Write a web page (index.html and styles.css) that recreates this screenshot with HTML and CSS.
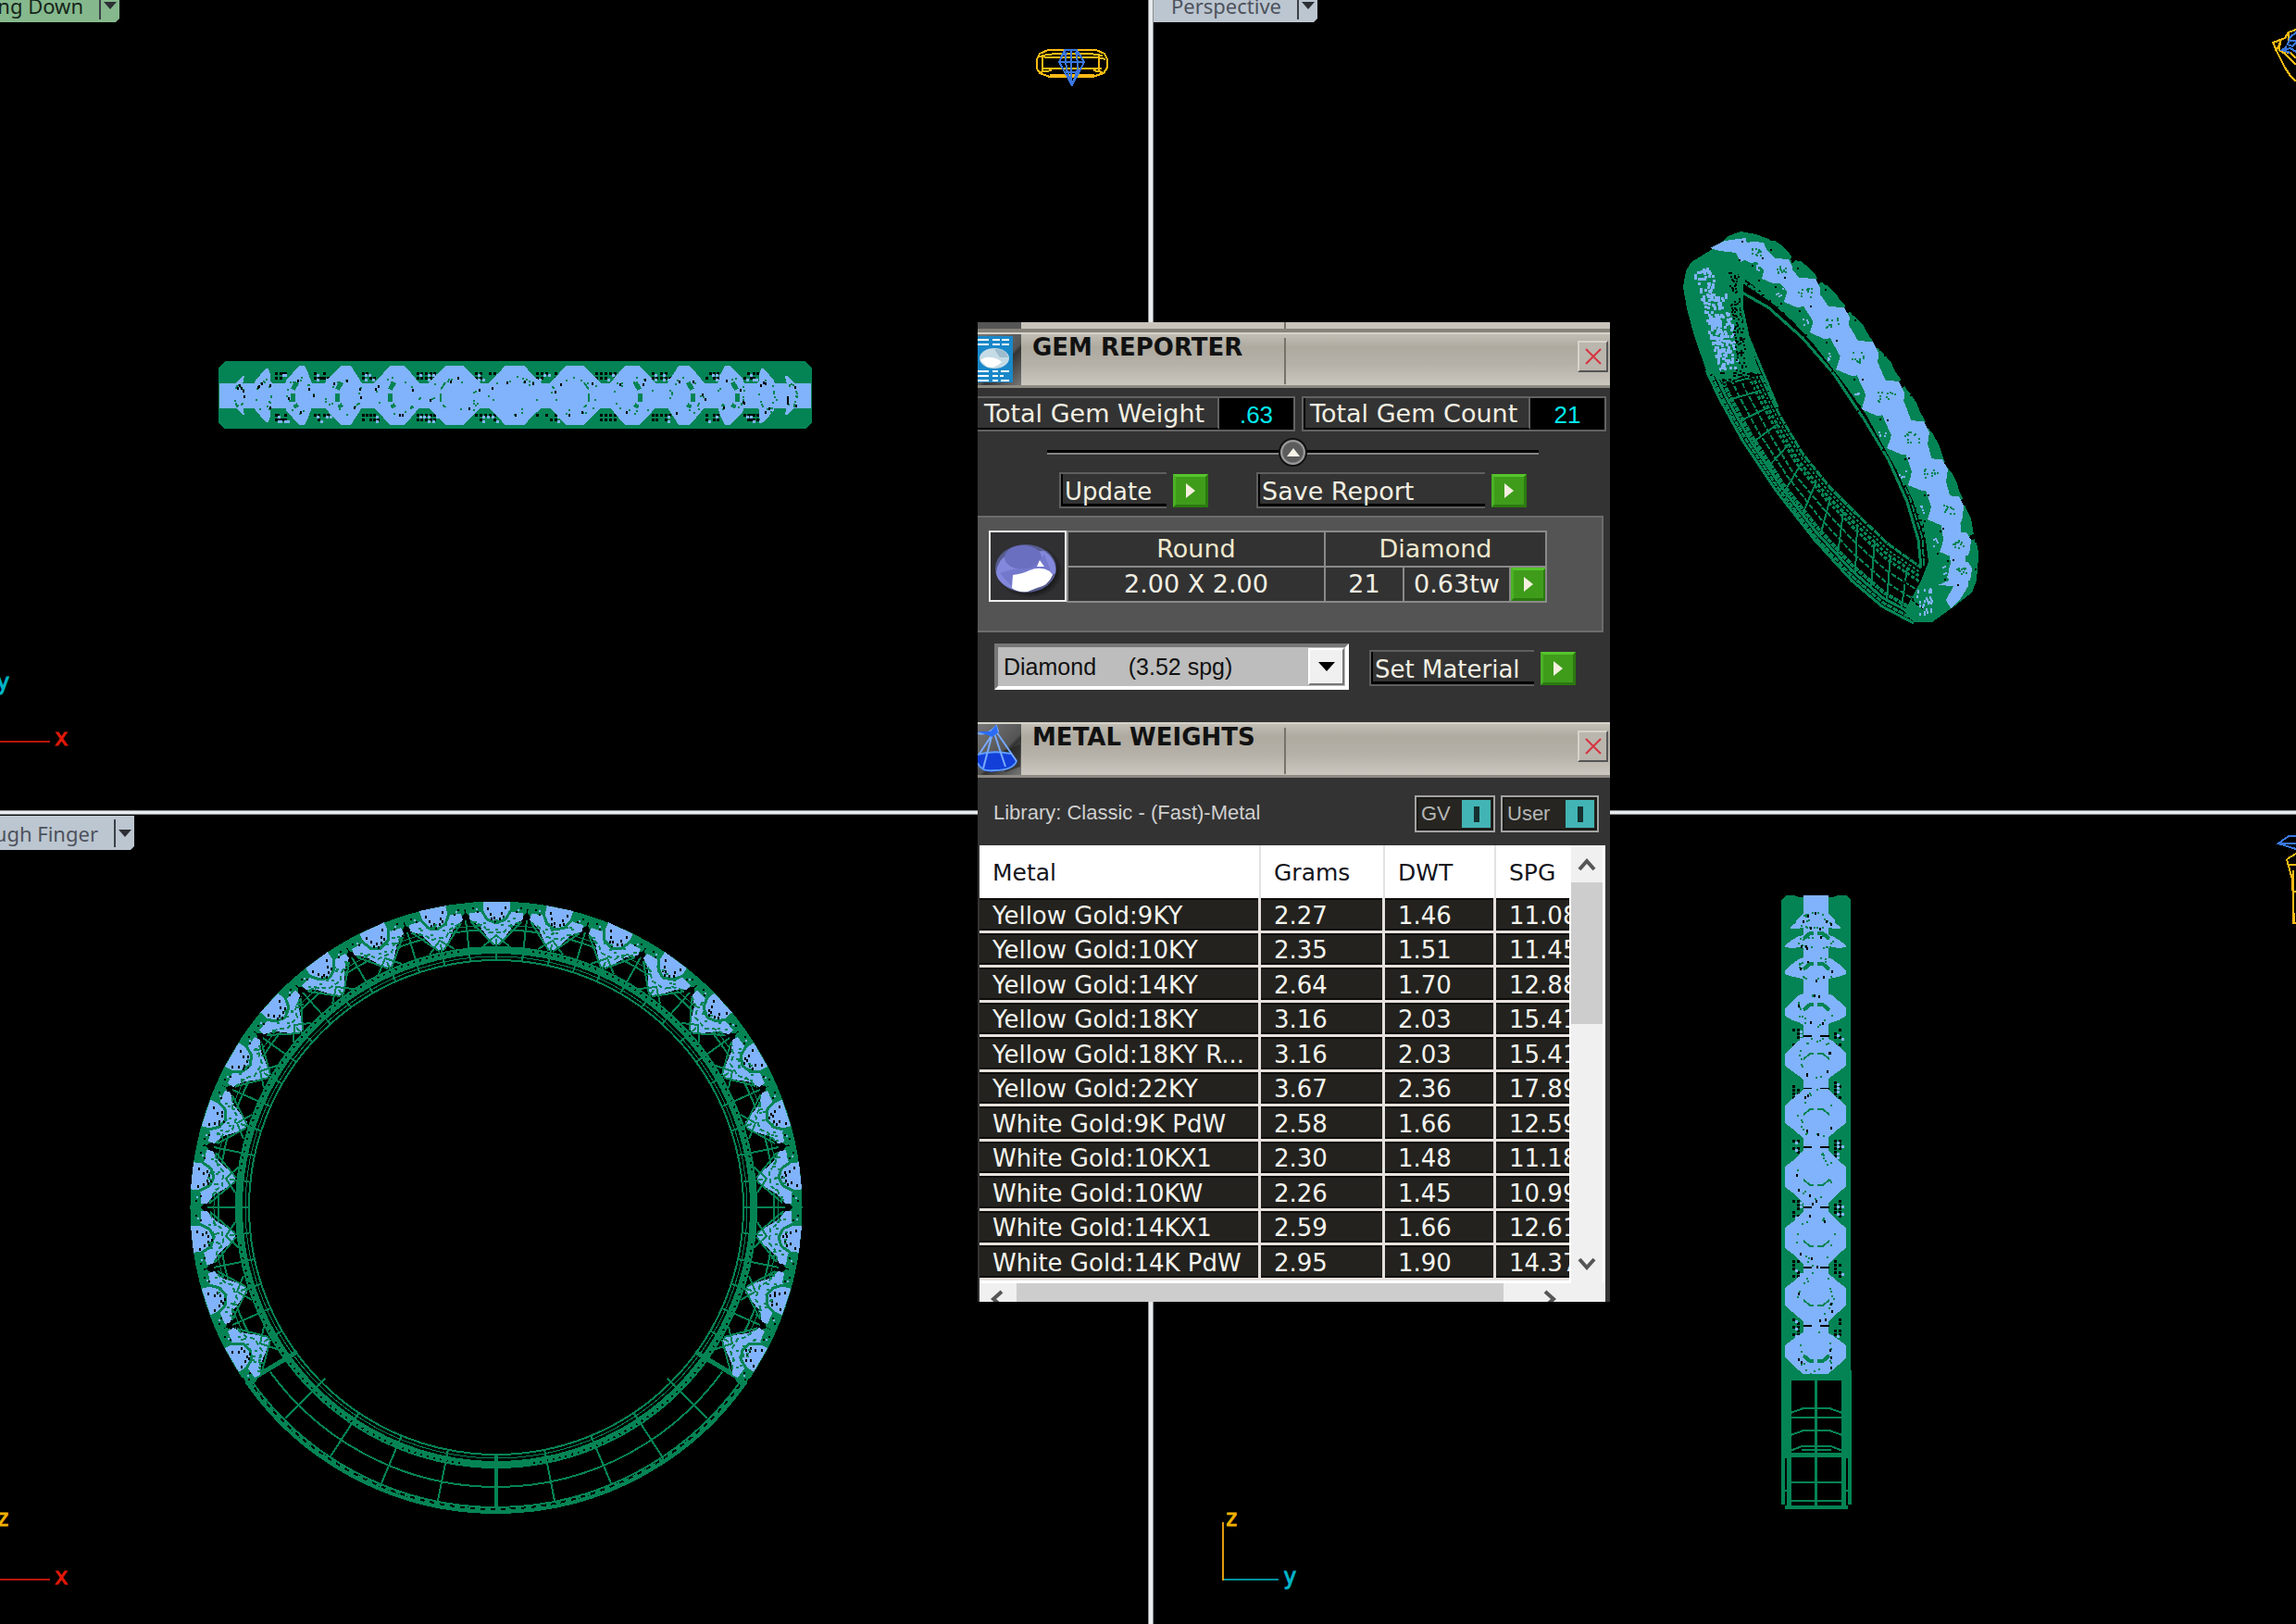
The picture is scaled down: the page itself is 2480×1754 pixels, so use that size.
FILE: index.html
```html
<!DOCTYPE html>
<html lang="en">
<head>
<meta charset="utf-8">
<title>Ring model - Gem Reporter</title>
<link rel="stylesheet" href="styles.css">
</head>
<body>
<main class="workspace">
  <section class="viewport">
    <svg class="scene" id="view-top" viewBox="0 0 1240 875" preserveAspectRatio="xMinYMin meet" aria-label="Looking down view">
      <g class="model"></g>
      <g class="gizmo-ring"><path d="M1132 54H1184L1193 58L1196 64V73L1192 79L1180 83H1134L1123 79L1120 74V64L1123 58Z"/><path d="M1125 60L1140 58H1178L1191 60M1125 74H1190M1134 81H1182M1126 60V77M1187 60V77M1122 61L1133 62H1186L1194 64M1123 78L1136 76M1191 78L1181 76"/></g>
      <g class="gizmo-gem"><path d="M1150 54H1163L1171 67L1158 92L1144 67ZM1144 67H1171M1157 54V92M1150 54L1152 75L1158 92M1163 54L1164 75L1158 92M1147 60L1153 57M1167 60L1161 57M1150 78H1165"/></g>
      <text class="axis axis-y" x="-4" y="745">y</text>
      <path class="axis-line-x" d="M0 801H54"/><text class="axis axis-x" x="59" y="805">x</text>
    </svg>
    <button class="view-label view-label-active">Looking Down<span class="view-menu"></span></button>
  </section>
  <section class="viewport">
    <svg class="scene" id="view-persp" viewBox="1246 0 1234 875" preserveAspectRatio="xMinYMin meet" aria-label="Perspective view">
      <g class="model"></g>
      <g class="gizmo-ring"><path d="M2480 32L2472 35L2468 41L2455 46L2461 59L2468 73L2474 82L2480 88M2455 46L2464 43L2461 50L2458 55M2463 44L2462 54L2468 58L2480 70M2472 35V46M2466 56L2474 57L2480 63"/></g>
      <g class="gizmo-gem"><path d="M2480 35L2474 40L2471 48L2476 50L2480 46M2466 54L2474 52L2480 56M2470 50L2465 54L2474 57M2473 44H2480"/></g>
    </svg>
    <button class="view-label">Perspective<span class="view-menu"></span></button>
  </section>
  <section class="viewport">
    <svg class="scene" id="view-front" viewBox="0 880 1240 874" preserveAspectRatio="xMinYMin meet" aria-label="Through finger view">
      <g class="model"></g>
      <text class="axis axis-z" x="-4" y="1648">z</text>
      <path class="axis-line-x" d="M0 1706H54"/><text class="axis axis-x" x="59" y="1711">x</text>
    </svg>
    <button class="view-label view-label-full">Through Finger<span class="view-menu"></span></button>
  </section>
  <section class="viewport">
    <svg class="scene" id="view-side" viewBox="1246 880 1234 874" preserveAspectRatio="xMinYMin meet" aria-label="Side view">
      <g class="model"></g>
      <g class="gizmo-gem"><path d="M2480 903H2472L2461 911L2480 917M2461 911H2480"/></g>
      <g class="gizmo-ring"><path d="M2470 928L2480 922M2470 928L2476 950L2478 997M2473 934H2480M2477 940V997H2480M2478 963H2480"/></g>
      <text class="axis axis-z" x="1323" y="1648">z</text>
      <path class="axis-line-z" d="M1321 1644V1707"/><path class="axis-line-y" d="M1322 1706H1381"/><text class="axis axis-y" x="1386" y="1711">y</text>
    </svg>
  </section>
</main>

<aside class="panel">
  <div class="panel-strip"></div>
  <header class="panel-header">
    <span class="panel-icon">
      <svg width="47" height="58" viewBox="0 0 47 58" aria-hidden="true">
        <rect x="0" y="2" width="38" height="50" fill="#1988c9"/>
        <path d="M0 6H12M16 6H24M26 6H34M0 11H12M16 11H24M26 11H34M0 40H12M16 40H22M25 40H34M0 45H12M16 45H22M24 45H28M0 50H12M16 50H22M25 50H34" stroke="#fff" stroke-width="2"/>
        <ellipse cx="18" cy="26" rx="16" ry="11" fill="#c5dbe6"/>
        <path d="M3 28Q10 22 22 27L26 30Q18 38 10 35Z" fill="#fff"/>
        <path d="M18 16Q30 15 33 25L24 25Z" fill="#9dbccd"/>
      </svg>
    </span>
    <h2 class="panel-title">GEM REPORTER</h2>
    <span class="panel-grip"></span>
    <button class="close" aria-label="Close gem reporter"><svg width="18" height="18" viewBox="0 0 18 18"><path d="M1 1L17 17M17 1L1 17"/></svg></button>
  </header>

  <div class="totals">
    <div class="total total-weight"><span class="total-name">Total Gem Weight</span><output class="total-value">.63</output></div>
    <div class="total total-count"><span class="total-name">Total Gem Count</span><output class="total-value">21</output></div>
  </div>

  <div class="fold">
    <button class="fold-button" aria-label="Collapse"><span class="fold-arrow"></span></button>
  </div>

  <div class="actions">
    <span class="caption caption-update" id="cap-update">Update</span>
    <button class="go" aria-labelledby="cap-update"><span class="go-arrow"></span></button>
    <span class="caption caption-save" id="cap-save">Save Report</span>
    <button class="go" aria-labelledby="cap-save"><span class="go-arrow"></span></button>
  </div>

  <div class="gems">
    <div class="gem-picture">
      <svg width="80" height="72" viewBox="0 0 80 72" aria-hidden="true">
        <defs><radialGradient id="shade"><stop offset="70%" stop-color="#111"/><stop offset="100%" stop-color="#111" stop-opacity="0"/></radialGradient></defs>
        <ellipse cx="42" cy="42" rx="36" ry="29" fill="url(#shade)"/>
        <ellipse cx="38" cy="39" rx="33" ry="26" fill="#555b8c"/>
        <path d="M6 44Q8 26 24 22L58 20Q72 30 70 44L52 56L26 62Q8 56 6 44Z" fill="#8388dc"/>
        <ellipse cx="35" cy="27" rx="20" ry="13" fill="#6a6fc0"/>
        <path d="M24 40L46 38L58 24L66 44L24 60L10 44Z" fill="#7378cc"/>
        <path d="M53 30L58 37L50 37Z" fill="#fff"/>
        <path d="M24 46Q34 45 42 41Q54 36 64 42L67 46Q62 58 50 60L40 64Q28 65 23 60Z" fill="#fff"/>
      </svg>
    </div>
    <table class="gem-table">
      <colgroup><col class="gem-size"><col class="gem-count"><col class="gem-weight"><col></colgroup>
      <tr><th>Round</th><th colspan="3">Diamond</th></tr>
      <tr><td>2.00 X 2.00</td><td>21</td><td>0.63tw</td><td><button class="go" aria-label="Select gems"><span class="go-arrow"></span></button></td></tr>
    </table>
  </div>

  <div class="material">
    <div class="combo">
      <select class="combo-box" aria-label="Material"><option>Diamond&nbsp;&nbsp;&nbsp;&nbsp; (3.52 spg)</option></select>
      <span class="combo-button"></span>
    </div>
    <span class="caption caption-set" id="cap-set">Set Material</span>
    <button class="go" aria-labelledby="cap-set"><span class="go-arrow"></span></button>
  </div>

  <header class="panel-header">
    <span class="panel-icon">
      <svg width="47" height="58" viewBox="0 0 47 58" aria-hidden="true">
        <path d="M20 32L46 22V46L30 52Z" fill="#222" opacity=".6"/>
        <path d="M0 34Q16 26 36 32L43 40Q40 48 26 50Q12 54 4 49L0 44Z" fill="#123fd8"/>
        <path d="M0 33Q16 28 36 32M0 42Q4 52 18 50Q38 50 42 40" stroke="#5e9cff" stroke-width="2" fill="none"/>
        <path d="M0 10Q8 12 16 6L20 2L22 8L14 14L2 32M16 10L6 48M18 10L30 46M20 8L42 40" stroke="#79a9ff" stroke-width="2" fill="none"/>
        <path d="M0 8L14 8L20 1L22 9L16 14Z" fill="#2b6cf5"/>
      </svg>
    </span>
    <h2 class="panel-title">METAL WEIGHTS</h2>
    <span class="panel-grip"></span>
    <button class="close" aria-label="Close metal weights"><svg width="18" height="18" viewBox="0 0 18 18"><path d="M1 1L17 17M17 1L1 17"/></svg></button>
  </header>

  <div class="library">
    <span class="library-name">Library: Classic - (Fast)-Metal</span>
    <label class="toggle toggle-gv">GV<input type="checkbox" checked></label>
    <label class="toggle toggle-user">User<input type="checkbox" checked></label>
  </div>

  <div class="list">
    <div class="list-main">
      <div class="list-clip">
        <table class="metals">
          <thead><tr><th class="col-metal">Metal</th><th class="col-grams">Grams</th><th class="col-dwt">DWT</th><th class="col-spg">SPG</th></tr></thead>
          <tbody>
            <tr><td>Yellow Gold:9KY</td><td>2.27</td><td>1.46</td><td>11.08</td></tr>
            <tr><td>Yellow Gold:10KY</td><td>2.35</td><td>1.51</td><td>11.45</td></tr>
            <tr><td>Yellow Gold:14KY</td><td>2.64</td><td>1.70</td><td>12.88</td></tr>
            <tr><td>Yellow Gold:18KY</td><td>3.16</td><td>2.03</td><td>15.41</td></tr>
            <tr><td>Yellow Gold:18KY R...</td><td>3.16</td><td>2.03</td><td>15.41</td></tr>
            <tr><td>Yellow Gold:22KY</td><td>3.67</td><td>2.36</td><td>17.89</td></tr>
            <tr><td>White Gold:9K PdW</td><td>2.58</td><td>1.66</td><td>12.59</td></tr>
            <tr><td>White Gold:10KX1</td><td>2.30</td><td>1.48</td><td>11.18</td></tr>
            <tr><td>White Gold:10KW</td><td>2.26</td><td>1.45</td><td>10.99</td></tr>
            <tr><td>White Gold:14KX1</td><td>2.59</td><td>1.66</td><td>12.61</td></tr>
            <tr><td>White Gold:14K PdW</td><td>2.95</td><td>1.90</td><td>14.37</td></tr>
          </tbody>
        </table>
      </div>
      <div class="scroll-v">
        <svg class="scroll-up" viewBox="0 0 34 40"><path d="M9 26L17 17L25 26"/></svg>
        <span class="scroll-thumb-v"></span>
        <svg class="scroll-down" viewBox="0 0 34 40"><path d="M9 14L17 23L25 14"/></svg>
      </div>
    </div>
    <div class="scroll-h">
      <svg class="scroll-left" viewBox="0 0 40 34"><path d="M24 9L15 17L24 25"/></svg>
      <span class="scroll-thumb-h"></span>
      <svg class="scroll-right" viewBox="0 0 40 34"><path d="M16 9L25 17L16 25"/></svg>
    </div>
  </div>
</aside>
<script src="models.js"></script>
</body>
</html>
```
FILE: styles.css
```css
* { box-sizing: border-box; }

body {
  margin: 0;
  height: 100vh;
  overflow: hidden;
  position: relative;
  background: #000;
  font-family: "DejaVu Sans", Verdana, sans-serif;
  font-size: 26px;
  color: #f2efe2;
}

button { padding: 0; font: inherit; color: inherit; }

/* Viewports */
.workspace {
  display: grid;
  grid-template-columns: 1240fr 1234fr;
  grid-template-rows: 875fr 874fr;
  gap: 5px 6px;
  height: 100vh;
  background: #e8ebee;
}
.viewport { position: relative; min-height: 0; overflow: hidden; background: #000; box-shadow: 0 0 0 1px #8a8d90; }
.scene { display: block; width: 100%; height: 100%; }
.scene path, .scene rect, .scene polygon { shape-rendering: crispEdges; }

.view-label {
  position: absolute;
  top: -13px;
  left: 0;
  display: flex;
  align-items: center;
  justify-content: flex-end;
  gap: 17px;
  width: 177px;
  height: 37px;
  border: 0;
  background: #bcc6d0;
  color: #4d525c;
  font: 22px/34px "Noto Sans", "Open Sans", sans-serif;
  white-space: nowrap;
  overflow: hidden;
  clip-path: polygon(0 0, 100% 0, 100% 33px, calc(100% - 4px) 100%, 0 100%);
}
.view-label-active { width: 129px; background: #85b98d; color: #16241a; }
.view-label-full { top: 1px; width: 145px; }
.view-menu {
  flex: none;
  width: 22px;
  height: 30px;
  border-left: 2px solid #3c4046;
  display: grid;
  place-items: center;
}
.view-menu::before {
  content: "";
  border: 7px solid transparent;
  border-top: 8px solid #2c2f34;
  border-bottom: 0;
}

.axis { font: 24px "DejaVu Sans Mono", monospace; stroke-width: 1; }
.axis-x { fill: #e01808; stroke: #e01808; }
.axis-y { fill: #00b4c8; stroke: #00b4c8; }
.axis-z { fill: #f2b200; stroke: #f2b200; }
.axis-line-x { stroke: #b81408; stroke-width: 2; }
.axis-line-y { stroke: #00909c; stroke-width: 2; }
.axis-line-z { stroke: #e09c10; stroke-width: 2; }
.gizmo-ring path { fill: none; stroke: #fdbb13; stroke-width: 2; }
.gizmo-gem path { fill: none; stroke: #3a78e0; stroke-width: 2; }

/* Tool panel */
.panel {
  position: absolute;
  left: 1056px;
  top: 348px;
  width: 683px;
  background: #333;
}
.panel-strip {
  height: 11px;
  border-bottom: 4px solid #87837b;
  background: linear-gradient(90deg, #555 0 47px, #c8c4bc 47px 331px, #77736b 331px 333px, #c8c4bc 333px);
}
.panel-header {
  display: flex;
  align-items: flex-start;
  height: 60px;
  padding-right: 2px;
  border-top: 2px solid #d5d2ca;
  border-bottom: 3px solid #8d8a82;
  background: linear-gradient(#c2beb5, #aeaaa0 25%, #b5b1a8 60%, #cbc7bf);
}
.panel-icon { width: 47px; height: 100%; overflow: hidden; background: linear-gradient(135deg, #777, #555 55%, #333 60%, #777); }
.panel-icon svg { display: block; }
.panel-title { margin: 0; padding-left: 12px; width: 284px; font-size: 26px; line-height: 28px; font-weight: bold; color: #111; white-space: nowrap; }
.panel-grip { width: 2px; height: 50px; margin-top: 4px; background: #77736b; }
.close {
  margin: 7px 0 0 auto;
  width: 33px;
  height: 34px;
  display: grid;
  place-items: center;
  border: 2px solid #d6d3cc;
  border-right-color: #555;
  border-bottom-color: #555;
  background: #bab6ad;
}
.close path { stroke: #d63340; stroke-width: 2; fill: none; }

.totals { display: flex; gap: 7px; margin-top: 9px; padding-right: 4px; font-size: 27px; }
.total { display: flex; height: 38px; border: 2px solid #626262; line-height: 34px; white-space: nowrap; }
.total-weight { width: 343px; border-left: 0; }
.total-count { flex: 1; }
.total-name { flex: 1; padding-left: 7px; border-bottom: 2px solid #000; border-right: 2px solid #626262; }
.total-count .total-name { border-left: 2px solid #000; padding-left: 5px; }
.total-value { width: 80px; background: #000; color: #00e8ee; font-family: "Liberation Sans", Arial, sans-serif; font-size: 26px; text-align: center; line-height: 36px; }

.fold { height: 44px; display: grid; place-items: center; margin: 0 77px 0 75px; background: linear-gradient(transparent 20px, #000 20px 23px, #858585 23px 25px, transparent 25px); }
.fold-button { width: 31px; height: 31px; display: grid; place-items: center; border: 2px solid #111; border-radius: 50%; background: radial-gradient(#5c5c5c 55%, #999 62%); }
.fold-arrow { border: 7px solid transparent; border-bottom: 9px solid #f5f2e6; border-top: 0; }

.actions, .material { display: flex; align-items: center; }
.actions { padding-left: 88px; height: 39px; }
.caption {
  height: 39px;
  padding-left: 4px;
  border: 2px solid #5e5e5e;
  border-right: 0;
  box-shadow: inset 2px 0 #000, inset 0 -3px #000;
  line-height: 38px;
  white-space: nowrap;
}
.caption-update { width: 116px; }
.caption-save { width: 247px; margin-left: 52px; font-size: 27px; }
.go {
  width: 38px;
  height: 36px;
  margin-left: 7px;
  display: grid;
  place-items: center;
  border: 3px solid #2b7a10;
  border-top-color: #56c52c;
  border-left-color: #4bb224;
  background: #3f9c1b;
}
.go-arrow { border: 8px solid transparent; border-left: 10px solid #f5efdf; border-right: 0; }

.gems { display: flex; height: 126px; margin: 8px 7px 0 0; padding: 14px 0 0 12px; border: 2px solid #6c6c6c; border-left: 0; background: #545454; }
.gem-picture { width: 84px; height: 77px; border: 2px solid #f0f0f0; background: #303033; }
.gem-picture svg { display: block; }
.gem-table { width: 519px; height: 77px; table-layout: fixed; border-collapse: collapse; background: #323232; text-align: center; font-size: 27px; }
.gem-table th, .gem-table td { height: 38px; padding: 0; border: 2px solid #8a8a8a; font-weight: normal; line-height: 34px; }
.gem-table th { color: #efe9cf; }
.gem-size { width: 278px; }
.gem-count { width: 85px; }
.gem-weight { width: 115px; }
.gem-table .go { width: 38px; margin: 0; }

.material { margin-top: 12px; padding-left: 18px; height: 50px; }
.combo { position: relative; width: 383px; height: 50px; }
.combo-box {
  appearance: none;
  width: 100%;
  height: 100%;
  padding: 0 0 0 6px;
  border: 4px solid #fff;
  border-top-color: #777;
  border-left-color: #777;
  border-radius: 0;
  background: #bdbdbd;
  color: #111;
  font: 25px "Liberation Sans", Arial, sans-serif;
}
.combo-button { position: absolute; right: 5px; top: 5px; width: 39px; height: 40px; display: grid; place-items: center; border: 2px solid #fff; border-right-color: #777; border-bottom-color: #777; background: #f0f0f0; pointer-events: none; }
.combo-button::before { content: ""; border: 9px solid transparent; border-top: 10px solid #000; border-bottom: 0; }
.caption-set { width: 178px; margin-left: 22px; }
.material .caption, .material .go { margin-top: 3px; }
.material + .panel-header { margin-top: 35px; }

.library { display: flex; align-items: center; gap: 6px; height: 73px; padding: 4px 12px 0 17px; font: 22px "Liberation Sans", Arial, sans-serif; color: #cfcfcf; }
.library-name { flex: 1; padding-bottom: 2px; }
.toggle { display: flex; align-items: center; justify-content: space-between; height: 40px; padding: 4px 3px 3px 5px; border: 2px solid #a3a3a3; background: #262521; line-height: 44px; color: #b5b5b5; box-shadow: inset 0 0 0 2px #1b1a17; }
.toggle-gv { width: 87px; }
.toggle-user { width: 106px; }
.toggle input { appearance: none; margin: 0; width: 31px; height: 30px; background: linear-gradient(#15302f, #15302f) center / 6px 17px no-repeat #43b4b5; }

.list { margin: 0 5px 0 2px; background: #fff; }
.list-main { display: flex; }
.list-clip { flex: 1; overflow: hidden; min-width: 0; padding-bottom: 3px; }
.metals { width: 702px; table-layout: fixed; border-collapse: separate; border-spacing: 0; text-align: left; }
.metals th { height: 57px; padding: 2px 0 0 14px; font-size: 25px; font-weight: normal; color: #14141c; border-right: 2px solid #e2e2e2; }
.metals td { padding: 3px 0 0 14px; background: #23221e; border-right: 3px solid #e6e1dc; border-bottom: 3px solid #e6e1dc; box-shadow: inset 0 2px #0d0c0a, inset 0 -2px #0d0c0a; font-size: 26px; line-height: 31px; white-space: nowrap; color: #f4f4ee; }
.metals tr { height: 38px; }
.metals tbody tr:nth-child(even) { height: 37px; }
.col-metal { width: 304px; }
.col-grams { width: 134px; }
.col-dwt { width: 120px; }
.scroll-v { display: flex; flex-direction: column; width: 37px; margin-left: 2px; border-right: 3px solid #fff; background: #f0f0f0; }
.scroll-v svg, .scroll-h svg { flex: none; fill: none; stroke: #555; stroke-width: 4; }
.scroll-v svg { height: 40px; width: 34px; }
.scroll-thumb-v { height: 153px; margin-bottom: auto; background: #cdcdcd; }
.scroll-h { display: flex; height: 20px; overflow: hidden; background: #f0f0f0; }
.scroll-h svg { width: 40px; height: 34px; }
.scroll-thumb-h { width: 526px; background: #cdcdcd; }
.scroll-right { margin-left: 29px; }
```
FILE: models.js
```js
// Wireframe views of an eternity band: 21 stones, 12 degrees apart.
const GREEN = '#048454', BLUE = '#80b3fb';
const NS = 'http://www.w3.org/2000/svg';
let seed = 7;
const rnd = () => (seed = (seed * 16807) % 2147483647) / 2147483647;
const layer = id => document.querySelector('#' + id + ' .model');

function add(parent, name, attrs) {
  const el = document.createElementNS(NS, name);
  for (const key in attrs) el.setAttribute(key, attrs[key]);
  parent.appendChild(el);
  return el;
}
const fill = (g, d, color) => add(g, 'path', { d, fill: color });
const line = (g, d, width = 2, color = GREEN, dash = 'none') =>
  add(g, 'path', { d, fill: 'none', stroke: color, 'stroke-width': width, 'stroke-dasharray': dash });
const pts = list => list.map(p => Math.round(p[0]) + ' ' + Math.round(p[1])).join('L');
const poly = (g, list, color) => fill(g, 'M' + pts(list) + 'Z', color);
const dots = (g, list, color, w = 3, h = 2) =>
  fill(g, list.map(p => `M${Math.round(p[0])} ${Math.round(p[1])}h${w}v${h}h${-w}z`).join(''), color);

// Band seen edge on. put(along, across) maps to the page.
function stone(g, put, centre, half, reach, squash) {
  const w = 26 * squash + 3, f = 10 * squash * squash + 1;
  const shift = centre.dir * (1 - squash) * 6;
  const side = s => [[s * f + shift, -reach], [s * w * .6 + shift / 2, -reach * .75], [s * w * .84, -reach * .55], [s * w, -half], [s * w, half], [s * w * .84, reach * .55], [s * w * .6 + shift / 2, reach * .75], [s * f + shift, reach]];
  poly(g, side(1).concat(side(-1).reverse()).map(p => put(centre.at + p[0], p[1])), BLUE);
  const marks = [], holes = [];
  for (let i = 0; i < 20; i++) {
    const a = rnd() * 6.28, r = .75 + rnd() * .3;
    (i % 4 ? marks : holes).push(put(centre.at + Math.cos(a) * w * r, Math.sin(a) * reach * .62 * r));
  }
  dots(g, marks, GREEN, 2, 2);
  dots(g, holes, '#000', 2, 3);
}
function pits(g, put, at, size) {
  const list = [];
  for (const s of [-1, 1]) for (let i = -2; i <= 2; i++) for (let j = 0; j < 2; j++)
    if (rnd() > .3) list.push(put(at + i * size, s * (25 - j * 5)));
  dots(g, list, '#000', 3, 3);
  dots(g, list.filter(() => rnd() > .6).map(p => [p[0] + 3, p[1] + 2]), BLUE, 3, 3);
}

// Looking down
{
  const g = layer('view-top');
  const put = (a, b) => [556 + a, 427 + b];
  fill(g, 'M243 390H869L877 397V457L870 463H242L236 457V397Z', GREEN);
  fill(g, 'M237 414H876V441H237Z', BLUE);
  for (let k = -6; k <= 6; k++) {
    const c = Math.cos(k * Math.PI / 15), s = Math.sin(k * Math.PI / 15);
    if (k < 6 && Math.abs(k + .5) < 5) pits(g, put, 314 * Math.sin((k + .5) * Math.PI / 15), 5 * c);
    stone(g, put, { at: 314 * s, dir: -Math.sign(k) }, 13, Math.abs(k) > 4 ? (Math.abs(k) > 5 ? 21 : 29) : 32, c * c);
    if (k && Math.abs(k) < 5) {
      const d = Math.sign(k), x = 314 * s + d * (k * d > 1 ? 2 : 10);
      line(g, 'M' + pts([put(x, -14), put(x + d * 5, -6), put(x + d * 5, 7), put(x, 13)]), k * d > 1 ? 5 : 2, GREEN, '9 4');
    }
  }
}

// Edge view from the side
{
  const g = layer('view-side');
  const put = (a, b) => [1961 + b, 1304 + a];
  fill(g, 'M1929 967H1938L1943 969H1980L1985 967H1994L1999 972V1491H1924V972Z', GREEN);
  fill(g, 'M1948 967H1975V1484H1948Z', BLUE);
  for (let k = 0; k <= 10; k++) {
    const a = k * Math.PI / 15, q = Math.sin(a);
    if (k > 3 && k < 10) pits(g, put, -314 * Math.cos(a + Math.PI / 30), 4);
    stone(g, put, { at: -314 * Math.cos(a) - (k > 2 && k < 7 ? 4 : 0), dir: Math.sign(7.5 - k) }, 13, k < 1 ? 21 : (k < 2 ? 27 : 33), Math.max(q * q, .1));
    if (k > 3 && k < 10) {
      const y = Math.round(1304 - 314 * Math.cos(a + Math.PI / 30));
      line(g, `M1948 ${y}H1957M1966 ${y}H1976`, 2, '#000');
    }
    if (k > 1) {
      const y = Math.round(1304 - 314 * Math.cos(a)) + (k < 7 ? -9 : 9), b = k < 7 ? 6 : -6;
      line(g, `M1948 ${y + b}L1955 ${y}H1959M1963 ${y}H1969L1976 ${y + b}`, k < 5 || k > 9 ? 4 : 2);
    }
  }
  line(g, 'M1926 1480V1625M1998 1480V1625M1928 1628H1996', 4);
  line(g, 'M1932 1486V1628M1991 1486V1628', 5);
  fill(g, 'M1934 1486H1990V1490H1934Z', GREEN);
  line(g, 'M1961 1484V1628', 3);
  line(g, 'M1934 1531H1990M1934 1601H1990M1934 1621H1990');
  line(g, 'M1934 1526L1948 1521H1976L1990 1526M1934 1550L1948 1545H1976L1990 1550M1934 1567L1946 1562H1978L1990 1567M1934 1570H1990M1946 1566H1978');
  line(g, 'M1934 1572H1990', 3);
  line(g, 'M1929 1490V1575M1995 1490V1575', 3);
  line(g, 'M1924 1610H1932M1990 1610H1999');
}

// Through the finger
{
  const g = layer('view-front');
  const cx = 536, cy = 1304;
  const at = (r, deg) => { const a = deg * Math.PI / 180; return [cx + r * Math.sin(a), cy - r * Math.cos(a)]; };
  const arc = (r, from, to) => { const p = at(r, from), q = at(r, to); return `M${p[0].toFixed(1)} ${p[1].toFixed(1)}A${r} ${r} 0 ${to - from > 180 ? 1 : 0} 1 ${q[0].toFixed(1)} ${q[1].toFixed(1)}`; };
  const ring = (r, w, dash) => line(g, arc(r, 0, 180) + arc(r, 180, 360), w, GREEN, dash);
  ring(267, 2); ring(271, 1); ring(275, 2); ring(279, 6);
  line(g, arc(279, 8, 82) + arc(279, 98, 172) + arc(279, 188, 262) + arc(279, 278, 352), 2, '#000', '2 5');
  // plain shank at the bottom
  line(g, arc(302, 126, 234));
  line(g, arc(324, 125, 235), 2);
  line(g, arc(329, 125, 235), 4);
  line(g, arc(326, 125, 235), 2, GREEN, '6 5');
  for (let k = -4; k <= 4; k++) {
    const a = 180 + k * 11.25;
    line(g, 'M' + pts([at(Math.abs(k) > 3 ? 262 : 266, a), at(323, a)]), k ? 2 : 4);
  }
  for (const s of [-1, 1]) line(g, 'M' + pts([at(266, s * 126), at(330, s * 125)]), 5);
  // set part
  line(g, arc(300, -120, 120), 2);
  line(g, arc(305, -122, 122), 1);
  line(g, arc(327, -124, 124), 7);
  for (let k = -10; k < 10; k++) line(g, 'M' + pts([at(267, k * 12 + 6), at(312, k * 12 + 6)]));
  for (let k = -10; k <= 10; k++) {
    const t = k * 12;
    const p = (x, y) => { const a = t * Math.PI / 180; return [cx + x * Math.cos(a) + y * Math.sin(a), cy + x * Math.sin(a) - y * Math.cos(a)]; };
    const P = list => list.map(q => p(q[0], q[1]));
    poly(g, P([[-33, 328], [33, 328], [33, 318], [26, 312], [-26, 312], [-33, 318]]), GREEN);
    poly(g, P([[-15, 330], [15, 330], [17, 319], [29, 318], [29, 311], [18, 304], [4, 284], [-4, 284], [-18, 304], [-29, 311], [-29, 318], [-17, 319]]), BLUE);
    line(g, 'M' + pts(P([[-30, 326], [-16, 328], [-16, 321], [-10, 311], [0, 307], [10, 311], [16, 321], [16, 328], [30, 326]])), 3);
    line(g, 'M' + pts(P([[-28, 309], [-14, 304], [-8, 297], [8, 297], [14, 304], [28, 309]])), 2, GREEN, '5 3');
    line(g, 'M' + pts(P([[-14, 282], [0, 294], [14, 282]])) + 'M' + pts(P([[0, 290], [0, 268]])));
    line(g, 'M' + pts(P([[-27, 308], [-2, 283]])) + 'M' + pts(P([[27, 308], [2, 283]])), 2);
    dots(g, P([[-7, 318], [5, 319], [-3, 314], [3, 313], [-10, 324], [9, 325], [-2, 310], [7, 315], [-6, 313]]), '#000', 2, 3);
    dots(g, P([[-26, 324], [-21, 320], [26, 324], [21, 320]]), '#000', 2, 2);
    dots(g, P([[-22, 323], [23, 322]]), BLUE, 2, 2);
    const bits = [];
    for (let i = 0; i < 14; i++) bits.push([(rnd() - .5) * 48, 301 + rnd() * 13]);
    dots(g, P(bits), GREEN, 3, 2);
  }
}

// Perspective; points are in thirds of a pixel from (1800, 230)
{
  const g = layer('view-persp');
  const m = list => list.map(p => [1800 + p[0] / 3, 230 + p[1] / 3]);
  const path = list => 'M' + pts(m(list));
  const mix = (a, b, t) => a.map((p, i) => [p[0] + (b[i][0] - p[0]) * t, p[1] + (b[i][1] - p[1]) * t]);
  // shank, far lower side
  const outer = [[130, 510], [170, 600], [250, 740], [360, 905], [480, 1060], [600, 1190], [700, 1275], [800, 1328]];
  const inner = [[280, 470], [320, 560], [370, 660], [440, 780], [530, 890], [610, 970], [720, 1075], [825, 1150]];
  for (const [t, w, dash] of [[0, 3, 'none'], [.06, 3, '6 1'], [.14, 3, 'none'], [.22, 4, '5 1'], [.4, 2, '6 2'], [.58, 2, '6 2'], [.76, 3, '4 2'], [.84, 3, '4 2'], [.92, 2, '3 2'], [1, 3, '9 1']])
    line(g, path(mix(outer, inner, t)), w, GREEN, dash);
  for (let i = 0; i < outer.length - 1; i++) for (const u of [.1, .6]) {
    const o = [outer[i][0] + (outer[i + 1][0] - outer[i][0]) * u, outer[i][1] + (outer[i + 1][1] - outer[i][1]) * u];
    const n = [inner[i][0] + (inner[i + 1][0] - inner[i][0]) * u, inner[i][1] + (inner[i + 1][1] - inner[i][1]) * u];
    line(g, path([[o[0] + (n[0] - o[0]) * .15, o[1] + (n[1] - o[1]) * .15], [o[0] + (n[0] - o[0]) * .85, o[1] + (n[1] - o[1]) * .85]]), 2);
  }
  // upper left interior
  poly(g, m([[55, 240], [62, 190], [80, 160], [160, 110], [230, 120], [260, 200], [240, 260], [250, 350], [280, 440], [300, 520], [190, 550], [130, 510], [90, 400], [65, 310]]), GREEN);
  const speck = [], black = [];
  for (let i = 0; i < 150; i++) {
    const t = rnd(), w = rnd();
    speck.push([100 + t * 75 + (w - .3) * 60, 175 + t * 330]);
  }
  for (let i = 0; i < 110; i++) {
    const t = rnd(), w = rnd();
    speck.push([145 + t * 40 + (w - .3) * 70, 260 + t * 240]);
    black.push([215 + t * 30 + (w - .5) * 35, 190 + t * 340]);
  }
  dots(g, m(speck), BLUE, 3, 3);
  dots(g, m(black), '#000', 2, 2);
  line(g, path([[112, 300], [130, 400], [175, 540]]), 5);
  for (let i = 0; i < 45; i++) black[i] = [170 + rnd() * 110, 515 + rnd() * 55];
  dots(g, m(black.slice(0, 45)), '#000', 3, 2);
  // near band
  poly(g, m([[160, 110], [200, 75], [240, 60], [290, 68], [330, 85], [410, 145], [490, 210], [580, 300], [665, 410], [755, 535], [835, 665], [900, 800], [960, 925], [992, 1030], [1012, 1110], [1005, 1190], [990, 1230], [925, 1280], [860, 1325], [800, 1325], [770, 1290], [825, 1190], [850, 1130], [835, 1010], [780, 890], [710, 770], [640, 640], [570, 545], [480, 430], [390, 330], [300, 250], [220, 190]]), GREEN);
  line(g, path([[240, 255], [330, 305], [440, 405], [540, 520], [640, 665], [720, 800], [780, 935], [815, 1060], [825, 1150]]), 3);
  line(g, path([[240, 220], [340, 285], [450, 385], [550, 510], [650, 655], [730, 790], [790, 925], [830, 1060], [835, 1150]]), 2, GREEN, '8 2');
  line(g, path([[250, 225], [350, 280], [460, 380], [560, 510], [660, 655], [740, 790], [800, 925], [842, 1060]]), 3, GREEN, '5 2');
  line(g, path([[242, 215], [242, 300], [265, 400], [305, 500], [360, 630]]), 3);
  line(g, path([[770, 1190], [800, 1260], [830, 1280]]), 2, '#000', '4 3');
  // scalloped outer edge
  const lobes = [[330, 85], [412, 148], [495, 220], [582, 318], [672, 432], [758, 558], [838, 690], [902, 820], [957, 940], [994, 1050], [1010, 1150]];
  for (let i = 0; i < lobes.length - 1; i++) {
    const a = lobes[i], b = lobes[i + 1], dx = b[0] - a[0], dy = b[1] - a[1];
    const q = (t, out) => [a[0] + dx * t + dy * out, a[1] + dy * t - dx * out];
    poly(g, m([q(.1, 0), q(.2, .08), q(.5, .1), q(.8, .05), q(1, -.05), q(.5, -.2)]), GREEN);
    if (i) poly(g, m([q(-.1, .1), q(.08, .12), q(.06, -.14), q(-.06, -.08)]), '#000');
  }
  // blue run of stones, joined by their girdles
  const stones = [[285, 125, 42], [360, 185, 52], [442, 255, 60], [530, 352, 66], [620, 467, 71], [704, 595, 72], [784, 724, 70], [848, 845, 66], [905, 960, 60], [937, 1070, 52], [950, 1160, 42]];
  poly(g, m([[140, 115], [190, 90], [258, 80], [262, 105], [300, 130], [240, 160], [225, 130], [175, 122]]), BLUE);
  poly(g, m([[915, 1150], [985, 1140], [978, 1210], [950, 1255], [920, 1280], [905, 1255], [930, 1210], [880, 1205], [915, 1190]]), BLUE);
  for (let i = 0; i < stones.length - 1; i++) {
    const [ax, ay, ar] = stones[i], [bx, by, br] = stones[i + 1];
    poly(g, m([[ax - ar * .35, ay + 10], [ax + ar * .75, ay - 10], [bx + br * .35, by - 10], [bx - br * .7, by + 10]]), BLUE);
  }
  for (const [x, y, r] of stones)
    poly(g, m([[x - r * .7, y - r * .7], [x - r * .1, y - r * .75], [x + r * .7, y - r * .7], [x + r * .95, y - r * .2], [x + r * .9, y + r * .4], [x + r * .8, y + r * .75], [x + r * .1, y + r * .8], [x - r * .3, y + r * .85], [x - r, y + r * .55], [x - r * .85, y + r * .1]]), BLUE);
  for (let i = 0; i < stones.length; i++) {
    const [x, y, r] = stones[i], a = [], b = [];
    for (let j = 0; j < 12; j++) a.push([x + (rnd() - .4) * r * .8, y + (rnd() - .5) * r * .5]);
    for (let j = 0; j < 5; j++) b.push([x - r * 1.1 - rnd() * 22, y + r * .2 - rnd() * 30]);
    dots(g, m(a), GREEN, 2, 2);
    dots(g, m(b), BLUE, 2, 2);
    dots(g, m([[x + r * 1.2, y - 8], [x - r, y - r * .8], [x - r * 1.2, y + r * .6], [x - r * .2, y + r]]), '#000', 2, 2);
  }
  const tail = [];
  for (let i = 0; i < 30; i++) tail.push([810 + rnd() * 50, 1215 + rnd() * 85]);
  dots(g, m(tail), BLUE, 2, 3);
}
```
